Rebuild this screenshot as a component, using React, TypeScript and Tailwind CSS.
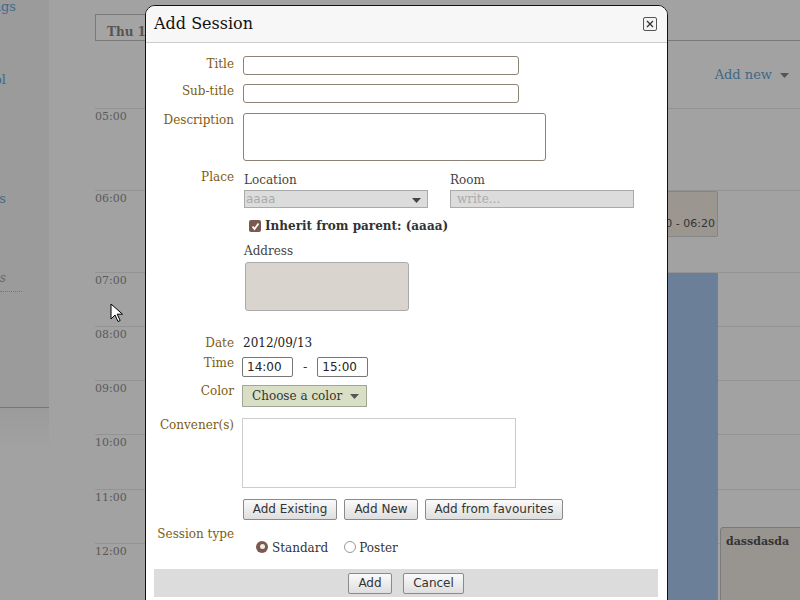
const serif = "[font-family:'DejaVu_Serif',serif]";
const sans = "[font-family:'DejaVu_Sans',sans-serif]";

const hours = [
  { t: "05:00", h: "h-[82px]" },
  { t: "06:00", h: "h-[82px]" },
  { t: "07:00", h: "h-[54px]" },
  { t: "08:00", h: "h-[54px]" },
  { t: "09:00", h: "h-[54px]" },
  { t: "10:00", h: "h-[55px]" },
  { t: "11:00", h: "h-[54px]" },
  { t: "12:00", h: "h-[80px]" },
];

function Label({ children, className = "" }: { children: React.ReactNode; className?: string }) {
  return (
    <div className={`w-[80px] shrink-0 whitespace-nowrap text-right text-[12px] leading-[14px] text-[#7d5c12] ${serif} ${className}`}>
      {children}
    </div>
  );
}

function Btn({ children, className = "" }: { children: React.ReactNode; className?: string }) {
  return (
    <button
      className={`h-[21px] whitespace-nowrap rounded-[2px] border border-[#8a8a8a] bg-gradient-to-b from-[#fafafa] to-[#dedede] text-[12px] leading-[19px] text-[#333] ${sans} ${className}`}
    >
      {children}
    </button>
  );
}

function Caret() {
  return (
    <svg width="9" height="5" viewBox="0 0 9 5" className="inline-block">
      <path d="M0 0h9L4.5 5z" fill="currentColor" />
    </svg>
  );
}

function Background() {
  return (
    <div className="flex h-full w-full">
      {/* sidebar */}
      <div className="flex w-[49px] shrink-0 flex-col">
        <div className="flex h-[408px] shrink-0 flex-col border-b border-[#777] bg-[#9b9b9b]">
          <div className={`flex h-[14px] w-[16px] shrink-0 justify-end overflow-hidden whitespace-nowrap text-[13px] leading-[14px] text-[#44698a] ${serif}`}>
            Settings
          </div>
          <div className={`mt-[59px] flex h-[14px] w-[6px] shrink-0 justify-end overflow-hidden whitespace-nowrap text-[13px] leading-[14px] text-[#44698a] ${serif}`}>
            Protocol
          </div>
          <div className={`mt-[105px] flex h-[14px] w-[6px] shrink-0 justify-end overflow-hidden whitespace-nowrap text-[13px] leading-[14px] text-[#44698a] ${serif}`}>
            Contributions
          </div>
          <div className={`mt-[65px] flex h-[14px] w-[6px] shrink-0 justify-end overflow-hidden whitespace-nowrap text-[12px] italic leading-[14px] text-[#6a6a6a] ${serif}`}>
            Sessions
          </div>
          <div className="mt-[6px] w-[22px] border-b border-dotted border-[#777]" />
        </div>
        <div className="h-[45px] shrink-0 bg-gradient-to-b from-[#9b9b9b] to-[#a2a2a2]" />
      </div>
      <div className="w-[46px] shrink-0" />
      {/* calendar */}
      <div className="flex flex-1 flex-col">
        <div className="flex h-[41px] shrink-0 items-end border-b border-[#7a7a7a]">
          <div className={`h-[26px] w-[110px] border border-b-0 border-[#7a7a7a] bg-[#a4a4a4] pl-[11px] pt-[10px] text-[12px] font-bold leading-[14px] text-[#555] ${serif}`}>
            Thu 13/09
          </div>
        </div>
        <div className="flex h-[68px] shrink-0 items-center justify-end border-b border-[#939393] pr-[11px]">
          <span className={`flex items-center gap-[8px] text-[13px] text-[#3f6888] ${serif}`}>
            Add new
            <span className="text-[#555]">
              <Caret />
            </span>
          </span>
        </div>
        <div className="relative flex shrink-0 flex-col">
          {hours.map((h) => (
            <div key={h.t} className={`${h.h} shrink-0 border-b border-[#939393]`}>
              <div className={`pt-[1px] text-[11px] leading-[14px] text-[#5a5a5a] ${serif}`}>{h.t}</div>
            </div>
          ))}
          {/* events */}
          <div className="absolute left-[505px] top-[82px] flex h-[46px] w-[118px] justify-end rounded-[2px] border border-[#858585] bg-[#9b9690] pr-[2px] pt-[25px]">
            <span className={`text-[11px] leading-[14px] text-[#333] ${sans}`}>06:00 - 06:20</span>
          </div>
          <div className="absolute left-[505px] top-[164px] h-[360px] w-[118px] border-r border-[#7d7d7d] bg-[#6b8098]" />
          <div className="absolute left-[625px] top-[418px] h-[200px] w-[90px] rounded-tl-[3px] border border-[#7a7a7a] bg-[#98948f] pl-[5px] pt-[4px] leading-[14px]">
            <span className={`text-[11px] font-bold leading-[14px] text-[#333] ${serif}`}>dassdasda</span>
          </div>
        </div>
      </div>
    </div>
  );
}

function Modal() {
  return (
    <div className="absolute left-[145px] top-[5px] h-[620px] w-[523px] overflow-hidden rounded-t-[10px] border border-[#111] bg-white">
      <div className="flex h-[37px] items-center justify-between border-b border-[#cccccc] bg-[#f7f7f7] pl-[8px] pr-[10px]">
        <span className={`text-[16px] text-[#111] ${serif}`}>Add Session</span>
        <span className="flex h-[14px] w-[14px] items-center justify-center rounded-[2px] border border-[#555] bg-[#f4f4f4]">
          <svg width="8" height="8" viewBox="0 0 8 8">
            <path d="M1 1l6 6M7 1l-6 6" stroke="#333" strokeWidth="1.3" />
          </svg>
        </span>
      </div>
      <div className="flex w-[512px] flex-col pl-[8px] pt-[13px]">
        {/* Title */}
        <div className="flex gap-[9px]">
          <Label className="pt-[1px]">Title</Label>
          <div className="h-[19px] w-[276px] rounded-[3px] border border-[#8c8276]" />
        </div>
        <div className="mt-[9px] flex gap-[9px]">
          <Label>Sub-title</Label>
          <div className="h-[19px] w-[276px] rounded-[3px] border border-[#8c8276]" />
        </div>
        <div className="mt-[10px] flex gap-[9px]">
          <Label>Description</Label>
          <div className="h-[48px] w-[303px] rounded-[3px] border border-[#8c8276]" />
        </div>
        {/* Place */}
        <div className="mt-[9px] flex gap-[10px]">
          <Label>Place</Label>
          <div className="flex flex-col">
            <div className="flex gap-[22px]">
              <div className="flex flex-col">
                <span className={`pt-[3px] text-[12px] leading-[14px] text-[#444] ${serif}`}>Location</span>
                <div className="mt-[3px] flex h-[18px] w-[184px] items-center justify-between border border-[#aaa] bg-[#dcdcdc] pl-[1px] pr-[6px]">
                  <span className={`text-[12px] text-[#aaa] ${sans}`}>aaaa</span>
                  <span className="text-[#444]">
                    <Caret />
                  </span>
                </div>
              </div>
              <div className="flex flex-col">
                <span className={`pt-[3px] text-[12px] leading-[14px] text-[#444] ${serif}`}>Room</span>
                <div className="mt-[3px] flex h-[18px] w-[184px] items-center border border-[#aaa] bg-[#dcdcdc] pl-[6px]">
                  <span className={`text-[12px] text-[#aaa] ${serif}`}>write...</span>
                </div>
              </div>
            </div>
            <div className="mt-[10px] flex items-center gap-[4px] pl-[5px]">
              <span className="flex h-[12px] w-[12px] items-center justify-center rounded-[2px] bg-[#7a5a50]">
                <svg width="9" height="9" viewBox="0 0 9 9">
                  <path d="M1.5 4.5l2 2.5 4-5.5" stroke="#fff" strokeWidth="1.8" fill="none" />
                </svg>
              </span>
              <span className={`text-[12px] font-bold leading-[16px] text-[#333] ${serif}`}>Inherit from parent: (aaaa)</span>
            </div>
            <span className={`mt-[10px] text-[12px] leading-[14px] text-[#444] ${serif}`}>Address</span>
            <div className="ml-[1px] mt-[4px] h-[49px] w-[164px] rounded-[3px] border border-[#aaa] bg-[#d9d4cd]" />
          </div>
        </div>
        {/* Date */}
        <div className="mt-[25px] flex gap-[9px]">
          <Label>Date</Label>
          <span className={`text-[12px] leading-[14px] text-[#222] ${serif}`}>2012/09/13</span>
        </div>
        <div className="mt-[7px] flex gap-[8px]">
          <Label className="-mt-[1px]">Time</Label>
          <div className="flex items-center">
            <div className={`flex h-[20px] w-[51px] items-center rounded-[2px] border border-[#777] pl-[4px] text-[12px] text-[#222] ${sans}`}>14:00</div>
            <span className={`mx-[10px] text-[12px] text-[#333] ${sans}`}>-</span>
            <div className={`flex h-[20px] w-[51px] items-center rounded-[2px] border border-[#777] pl-[4px] text-[12px] text-[#222] ${sans}`}>15:00</div>
          </div>
        </div>
        <div className="mt-[8px] flex gap-[8px]">
          <Label className="-mt-[1px]">Color</Label>
          <div className={`flex h-[22px] w-[125px] items-center gap-[8px] border border-[#a2a698] bg-[#d8dfc4] pl-[9px] text-[12px] text-[#333] ${serif}`}>
            Choose a color
            <span className="text-[#555]">
              <Caret />
            </span>
          </div>
        </div>
        <div className="mt-[11px] flex gap-[8px]">
          <Label>Convener(s)</Label>
          <div className="h-[70px] w-[274px] border border-[#cccccc]" />
        </div>
        <div className="mt-[11px] flex gap-[7px] pl-[89px]">
          <Btn className="w-[94px]">Add Existing</Btn>
          <Btn className="w-[74px]">Add New</Btn>
          <Btn className="w-[138px]">Add from favourites</Btn>
        </div>
        <div className="mt-[7px] flex gap-[9px]">
          <Label>Session type</Label>
          <div className={`flex items-center pl-[13px] pt-[11px] text-[12px] leading-[14px] text-[#333] ${serif}`}>
            <span className="flex h-[12px] w-[12px] items-center justify-center rounded-full bg-[#7a5a50]">
              <span className="h-[5px] w-[5px] rounded-full bg-[#f0ebe8]" />
            </span>
            <span className="ml-[4px] mt-[3px]">Standard</span>
            <span className="ml-[16px] h-[12px] w-[12px] rounded-full border border-[#999] bg-white" />
            <span className="ml-[3px] mt-[3px]">Poster</span>
          </div>
        </div>
        <div className="mt-[14px] flex h-[28px] items-center justify-center gap-[11px] bg-[#dcdcdc]">
          <Btn className="w-[44px]">Add</Btn>
          <Btn className="w-[61px]">Cancel</Btn>
        </div>
      </div>
    </div>
  );
}

export default function App() {
  return (
    <div className="relative h-[600px] w-[800px] overflow-hidden bg-[#a2a2a2]">
      <Background />
      <Modal />
      <svg className="absolute left-[110px] top-[303px]" width="14" height="20" viewBox="0 0 14 20">
        <path d="M1 1v15l4-4 3 6.5 2.2-1-3-6.3H12.5z" fill="#fff" stroke="#000" strokeWidth="1" strokeLinejoin="round" />
      </svg>
    </div>
  );
}
